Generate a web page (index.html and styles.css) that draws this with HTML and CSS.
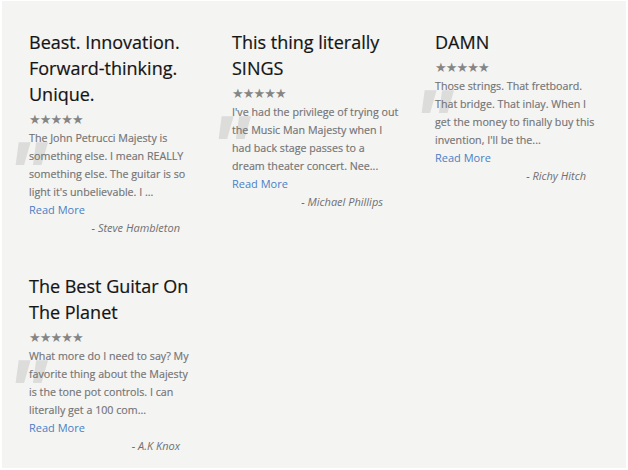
FILE: index.html
```html
<!DOCTYPE html>
<html>
<head>
<meta charset="utf-8">
<link rel="stylesheet" href="styles.css">
</head>
<body>
<div class="frame">
  <div class="grid">
    <div class="card">
      <h2 class="title">Beast. Innovation. Forward-thinking. Unique.</h2>
      <div class="stars">★★★★★</div>
      <div class="body">
        <span class="quote">"</span>
        <p class="text">The John Petrucci Majesty is something else. I mean REALLY something else. The guitar is so light it's unbelievable. I ...</p>
        <a class="more">Read More</a>
        <div class="author">- Steve Hambleton</div>
      </div>
    </div>
    <div class="card">
      <h2 class="title">This thing literally SINGS</h2>
      <div class="stars">★★★★★</div>
      <div class="body">
        <span class="quote">"</span>
        <p class="text">I've had the privilege of trying out the Music Man Majesty when I had back stage passes to a dream theater concert. Nee...</p>
        <a class="more">Read More</a>
        <div class="author">- Michael Phillips</div>
      </div>
    </div>
    <div class="card">
      <h2 class="title">DAMN</h2>
      <div class="stars">★★★★★</div>
      <div class="body">
        <span class="quote">"</span>
        <p class="text">Those strings. That fretboard. That bridge. That inlay. When I get the money to finally buy this invention, I'll be the...</p>
        <a class="more">Read More</a>
        <div class="author">- Richy Hitch</div>
      </div>
    </div>
    <div class="card">
      <h2 class="title">The Best Guitar On The Planet</h2>
      <div class="stars">★★★★★</div>
      <div class="body">
        <span class="quote">"</span>
        <p class="text">What more do I need to say? My favorite thing about the Majesty is the tone pot controls. I can literally get a 100 com...</p>
        <a class="more">Read More</a>
        <div class="author">- A.K Knox</div>
      </div>
    </div>
  </div>
</div>
</body>
</html>
```
FILE: styles.css
```css
* { box-sizing: border-box; }
html, body { margin: 0; padding: 0; background: #ffffff; }
body { padding: 1px 2px 2px 2px; font-family: "Open Sans", "Noto Sans", sans-serif; }
.frame {
  background: #f4f4f3;
  height: 467px;
  padding: 28px 0 0 27px;
}
.grid {
  display: grid;
  grid-template-columns: 203px 203px 203px;
  row-gap: 36px;
}
.card { width: 172px; }
.title {
  margin: 0;
  font-size: 18px;
  font-weight: 400;
  line-height: 26px;
  color: #141414;
  -webkit-text-stroke: 0.2px #141414;
}
.stars {
  margin-top: 4px;
  font-family: "DejaVu Sans", sans-serif;
  font-size: 13px;
  line-height: 18px;
  color: #858585;
  letter-spacing: -0.9px;
}
.body { position: relative; }
.quote {
  position: absolute;
  left: -22px;
  top: -2px;
  font-family: "Open Sans", sans-serif;
  font-weight: 700;
  font-style: italic;
  font-size: 88px;
  line-height: 88px;
  color: #dcdcdb;
}
.text {
  position: relative;
  width: 167px;
  margin: 0;
  font-size: 10.7px;
  line-height: 18px;
  color: #737373;
  -webkit-text-stroke: 0.15px #737373;
}
.more {
  position: relative;
  display: block;
  font-size: 11px;
  line-height: 18px;
  color: #4a7fc4;
}
.author {
  font-size: 11px;
  line-height: 18px;
  font-style: italic;
  color: #707070;
  text-align: right;
  padding-right: 21px;
}
```
